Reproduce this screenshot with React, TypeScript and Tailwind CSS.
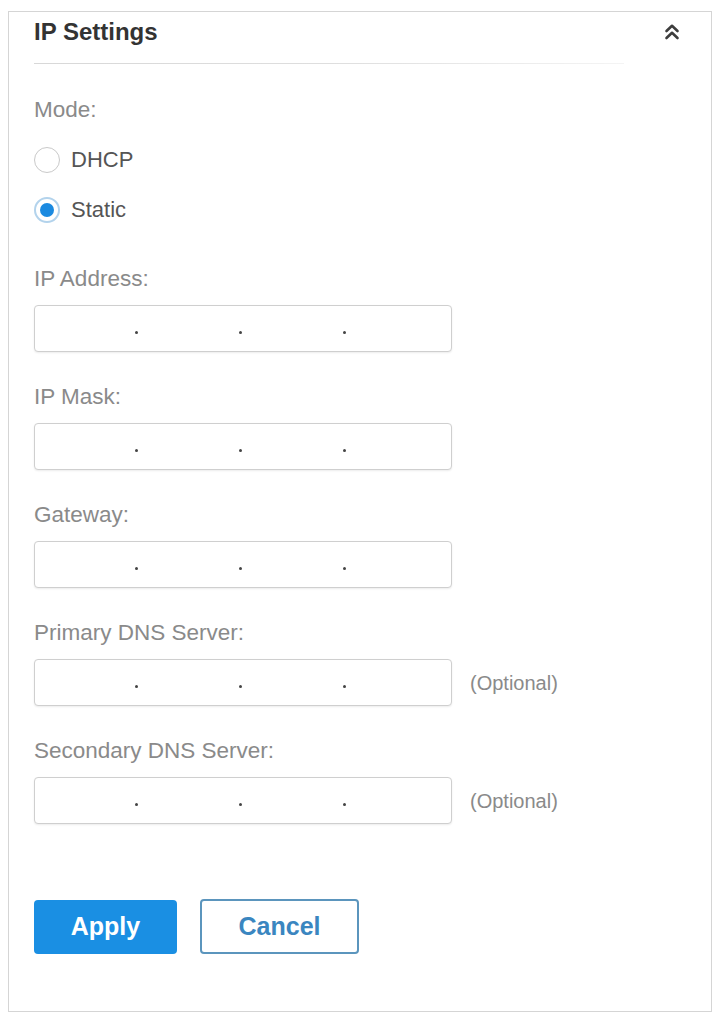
import { useState } from "react";

type Mode = "dhcp" | "static";

const fields = [
  { label: "IP Address:", optional: false },
  { label: "IP Mask:", optional: false },
  { label: "Gateway:", optional: false },
  { label: "Primary DNS Server:", optional: true },
  { label: "Secondary DNS Server:", optional: true },
];

function CollapseIcon() {
  return (
    <svg width="16" height="18" viewBox="0 0 16 18" fill="none" stroke="#3d3d3d" strokeWidth="2.6" strokeLinecap="round" strokeLinejoin="round">
      <path d="M2.5 8 L8 2.8 L13.5 8" />
      <path d="M2.5 15 L8 9.8 L13.5 15" />
    </svg>
  );
}

function Radio({ checked, label, onClick }: { checked: boolean; label: string; onClick: () => void }) {
  return (
    <button type="button" onClick={onClick} className="flex h-[28px] items-center gap-[11px]">
      {checked ? (
        <span className="flex h-[26px] w-[26px] items-center justify-center rounded-full border-2 border-[#b3d3ec] bg-white">
          <span className="h-[14px] w-[14px] rounded-full bg-[#1b8ae0]" />
        </span>
      ) : (
        <span className="h-[26px] w-[26px] rounded-full border-[1.5px] border-[#c9c9c9] bg-white" />
      )}
      <span className="text-[22px] leading-[26px] text-[#555]">{label}</span>
    </button>
  );
}

function IpInput() {
  return (
    <div className="grid h-[47px] w-[418px] grid-cols-4 rounded-[4px] border border-[#cfcfcf] bg-white shadow-[0_1px_2px_rgba(0,0,0,0.08)]">
      {[0, 1, 2, 3].map((i) => (
        <div key={i} className="relative">
          {i < 3 && (
            <span className="absolute right-[1px] top-[25px] h-[3px] w-[3px] rounded-full bg-[#444]" />
          )}
        </div>
      ))}
    </div>
  );
}

export default function App() {
  const [mode, setMode] = useState<Mode>("static");

  return (
    <div className="min-h-screen bg-white pl-[8px] pt-[11px] font-['Liberation_Sans',Arial,sans-serif]">
      <div className="h-[1001px] w-[704px] border border-[#d5d5d5] bg-white pl-[25px]">
        <div className="flex h-[40px] items-center justify-between pr-[31px]">
          <h2 className="text-[24px] font-bold text-[#333]">IP Settings</h2>
          <CollapseIcon />
        </div>
        <div className="mt-[11px] h-px w-[590px] bg-gradient-to-r from-[#d8d8d8] via-[#dedede] to-[#f4f4f4]" />

        <div className="mt-[34px] text-[22.5px] leading-[24px] text-[#8a8a8a]">Mode:</div>
        <div className="mt-[24px] flex flex-col gap-[22px]">
          <Radio checked={mode === "dhcp"} label="DHCP" onClick={() => setMode("dhcp")} />
          <Radio checked={mode === "static"} label="Static" onClick={() => setMode("static")} />
        </div>

        <div className="mt-[43px] flex flex-col gap-[33px]">
          {fields.map((f) => (
            <div key={f.label}>
              <div className="text-[22.5px] leading-[24px] text-[#8a8a8a]">{f.label}</div>
              <div className="mt-[14px] flex items-center gap-[18px]">
                <IpInput />
                {f.optional && <span className="text-[20px] text-[#8a8a8a]">(Optional)</span>}
              </div>
            </div>
          ))}
        </div>

        <div className="mt-[75px] flex items-center gap-[23px]">
          <button type="button" className="h-[54px] w-[143px] rounded-[4px] bg-[#1a8fe3] text-[25px] font-bold text-white">
            Apply
          </button>
          <button type="button" className="h-[55px] w-[159px] rounded-[4px] border-2 border-[#5b95bd] bg-white text-[25px] font-bold text-[#3a86c0]">
            Cancel
          </button>
        </div>
      </div>
    </div>
  );
}
